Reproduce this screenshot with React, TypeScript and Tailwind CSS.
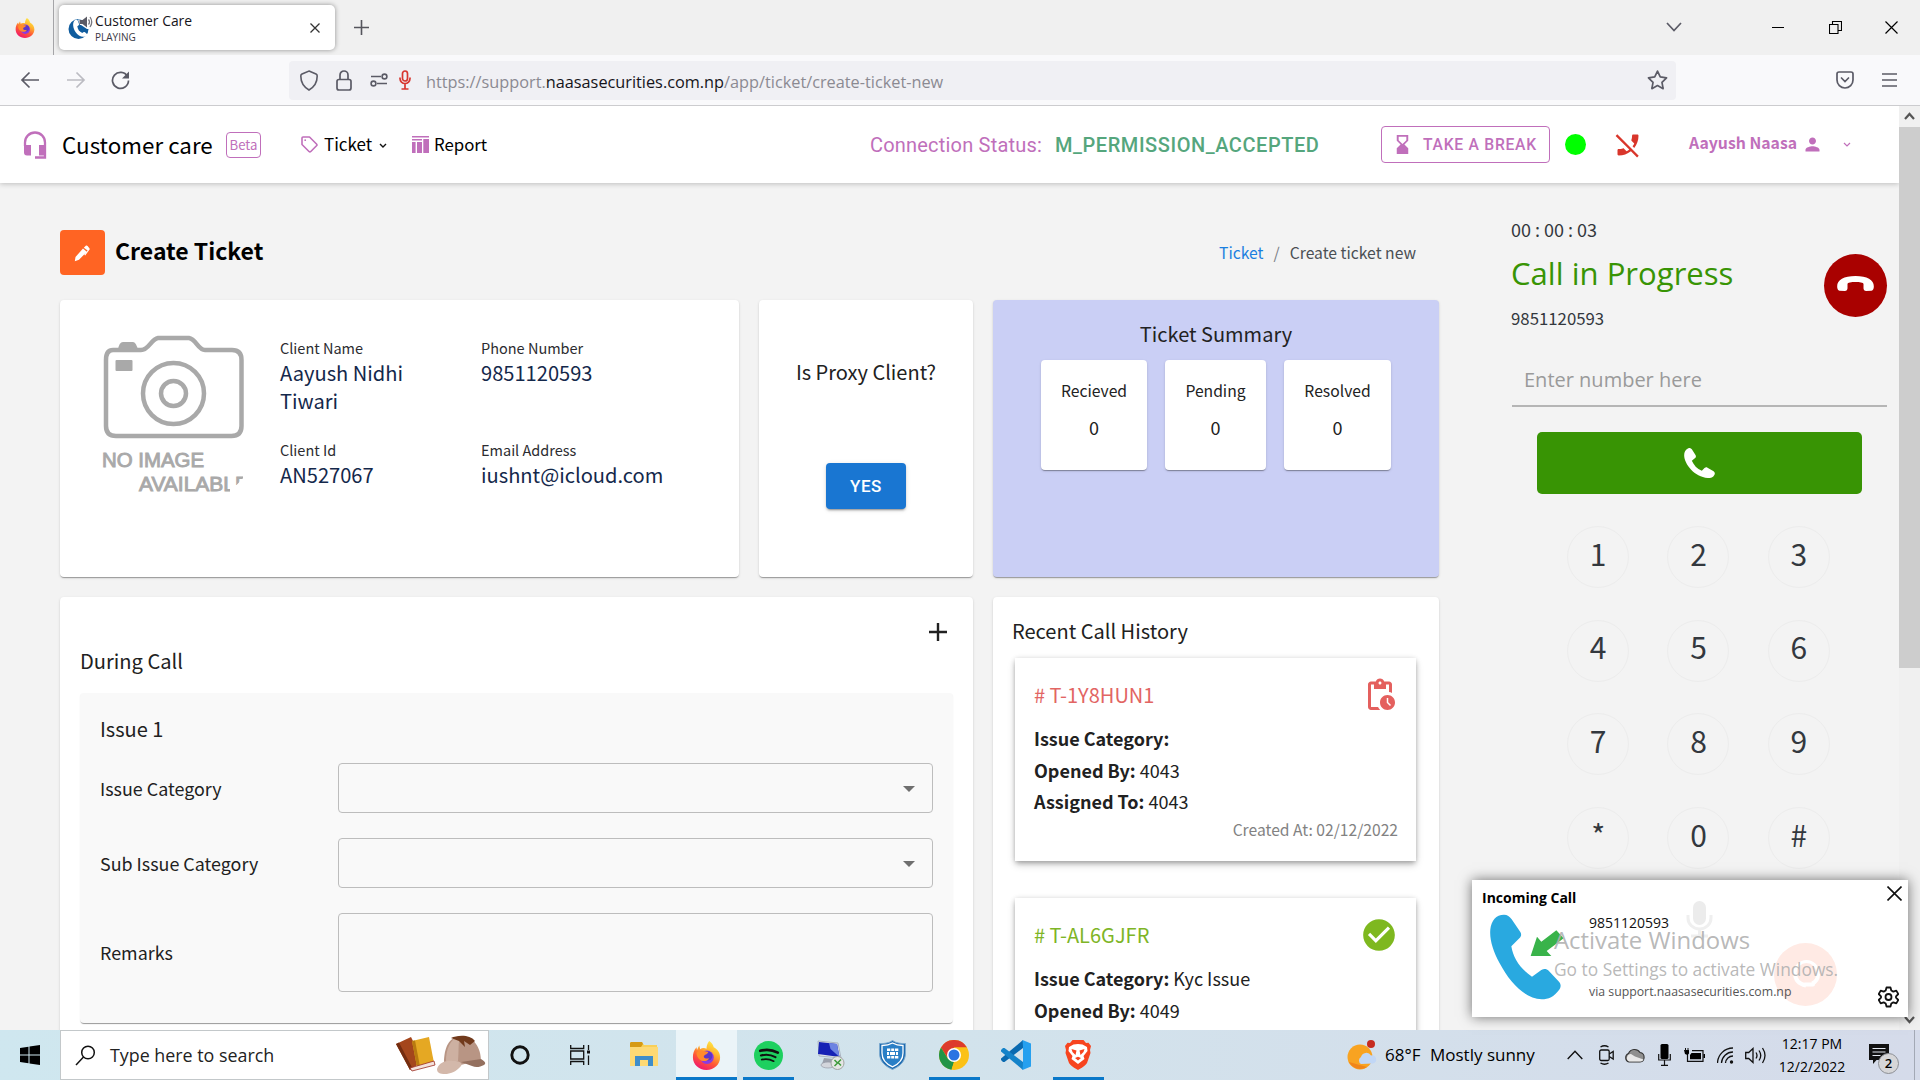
import React from 'react';
import type { ReactNode } from 'react';
import {
  MdCheckCircle,
  MdPerson,
  MdPhoneDisabled,
  MdHourglassBottom,
  MdOutlinePendingActions,
} from 'react-icons/md';

const JP = "font-['Noto_Sans_CJK_JP',sans-serif]";
const UI = "font-['Open_Sans',sans-serif]";
const RB = "font-['Roboto',sans-serif]";
const CARD = 'rounded-[4px] shadow-[0_2px_1px_-1px_rgba(0,0,0,0.2),0_1px_1px_0_rgba(0,0,0,0.14),0_1px_3px_0_rgba(0,0,0,0.12)]';

function Firefox({ size, id }: { size: number; id: string }) {
  return (
    <svg width={size} height={size} viewBox="0 0 32 32">
      <defs>
        <linearGradient id={id} x1="0.8" y1="0" x2="0.3" y2="1">
          <stop offset="0" stopColor="#fff04a" />
          <stop offset="0.35" stopColor="#ffb62e" />
          <stop offset="0.65" stopColor="#ff5a36" />
          <stop offset="1" stopColor="#f0146e" />
        </linearGradient>
      </defs>
      <path
        d="M19 0c3 2 4.500 4.500 5 7 4 2 7 6 7 11 0 8-6.500 14-15 14S1 26 1 18c0-4 1-8 4-11l.5 3L8 5l1 4c2-1.500 5-1.500 7-.5 0-3 1-6 3-8.500z"
        fill={`url(#${id})`}
      />
      <circle cx="16.500" cy="18" r="7.500" fill="#8a3be0" />
      <circle cx="17.500" cy="16.500" r="5" fill="#5b36c8" />
      <path d="M5 13c3-3 6-3 8-2l5 1c-1 3-5 3-5 5s3 3 6 2c-2 4-8 4-11 1-2-2-3-4-3-7z" fill="#ff8a2b" />
    </svg>
  );
}

function TabBar() {
  return (
    <div className="flex h-[55px] items-start bg-[#f0f0f0]">
      <div className="flex h-[55px] w-[54px] items-center justify-center border-r border-[#a5a5a8] pr-[3px]">
        <Firefox size={20} id="ffTab" />
      </div>
      <div className={`ml-[5px] mt-[5px] flex h-[45px] w-[276px] items-center rounded-[5px] bg-white shadow-[0_0_5px_rgba(0,0,0,0.4)] ${UI}`}>
        <svg className="ml-[9px] mt-[1px]" width="25" height="26" viewBox="0 0 25 26">
          <circle cx="10.500" cy="14" r="10" fill="#0f5c9e" />
          <path d="M7 5c1.500-.7 2.300-.3 3 1l1 3c.2 1-.5 1.700-1.700 2.300.5 3.300 2 5.500 5 6.700 1-1 1.700-1.300 2.700-.7l2 1.700c.5 1-.2 2-1.500 2.500-4 1-7.500-.7-10-4.500S4 7.500 7 5z" fill="#fff" />
          <path d="M10 4.500h3L19 0h6v14h-6l-6-4h-1z" fill="#fff" />
          <path d="M11.500 5h3L19 1.500v11L14.500 9h-3z" fill="#5b5b66" />
          <path d="M20.500 4.500q2 2.500 0 5M22 2q3.500 5 0 10" fill="none" stroke="#77777f" strokeWidth="1.300" />
        </svg>
        <div className="ml-[2px] flex w-[205px] flex-col">
          <span className="h-[18px] text-[13.900px] leading-[18px] text-[#15141a]">Customer Care</span>
          <span className="mt-[1px] h-[12px] text-[10px] leading-[12px] text-[#3a3944]">PLAYING</span>
        </div>
        <svg className="ml-[10px]" width="10" height="10" viewBox="0 0 10 10"><path d="M.5.5l9 9m0-9l-9 9" stroke="#333" strokeWidth="1.300" /></svg>
      </div>
      <svg className="ml-[19px] mt-[20px]" width="15" height="15" viewBox="0 0 15 15"><path d="M7.500 0v15M0 7.500h15" stroke="#55555c" strokeWidth="1.600" /></svg>
      <div className="ml-auto flex h-[54px] items-center">
        <svg width="16" height="10" viewBox="0 0 16 10" className="mr-[90px]"><path d="M1 1l7 7.500L15 1" fill="none" stroke="#5b5b66" strokeWidth="1.700" /></svg>
        <svg width="12" height="12" viewBox="0 0 12 12" className="mr-[45px] mt-[1px]"><path d="M0 5.500h12" stroke="#000" /></svg>
        <svg width="13" height="13" viewBox="0 0 13 13" className="mr-[43px]">
          <path d="M.5 3.500h8.500v9H.5zM3.500 3.500V.5h9v9H9" fill="none" stroke="#000" strokeWidth="1.100" />
        </svg>
        <svg width="13" height="13" viewBox="0 0 13 13" className="mr-[22px]"><path d="M.5.5l12 12m0-12l-12 12" stroke="#000" strokeWidth="1.200" /></svg>
      </div>
    </div>
  );
}

function NavBar() {
  return (
    <div className="flex h-[51px] items-center border-b border-[#cccccf] bg-[#f9f9fb]">
      <svg className="ml-[20px]" width="20" height="18" viewBox="0 0 20 18" fill="none" stroke="#5b5b66" strokeWidth="1.700"><path d="M19 9H2M9.500 1.500L2 9l7.500 7.500" /></svg>
      <svg className="ml-[26px]" width="20" height="18" viewBox="0 0 20 18" fill="none" stroke="#bcbcc2" strokeWidth="1.700"><path d="M1 9h17M10.500 1.500L18 9l-7.500 7.500" /></svg>
      <svg className="ml-[25px]" width="19" height="19" viewBox="0 0 19 19">
        <path d="M16.500 5.500A8 8 0 1 0 17.500 9.500" fill="none" stroke="#5b5b66" strokeWidth="1.700" />
        <path d="M18 .5v7h-7z" fill="#5b5b66" />
      </svg>
      <div className={`ml-[159px] flex h-[39px] w-[1387px] items-center rounded-[4px] bg-[#f0f0f4] ${UI}`}>
        <svg className="ml-[11px]" width="18" height="21" viewBox="0 0 18 21" fill="none" stroke="#5b5b66" strokeWidth="1.600"><path d="M9 1L16 4c1 .5 1.200 1 1.200 2 0 6-3 11-8.200 14C3.800 17 .8 12 .8 6c0-1 .2-1.500 1.200-2z" /></svg>
        <svg className="ml-[18px]" width="16" height="21" viewBox="0 0 16 21" fill="none" stroke="#5b5b66" strokeWidth="1.700"><rect x="1" y="9.500" width="14" height="10.500" rx="2" /><path d="M4 9V5a4 4 0 0 1 8 0v4" /></svg>
        <svg className="ml-[18px]" width="18" height="14" viewBox="0 0 18 14" fill="none" stroke="#5b5b66" strokeWidth="1.600"><path d="M1 3.500h10M7 10.500h10" /><circle cx="14.500" cy="3.500" r="2.400" /><circle cx="3.500" cy="10.500" r="2.400" /></svg>
        <svg className="ml-[11px]" width="12" height="20" viewBox="0 0 12 20" fill="none" stroke="#d7362f" strokeWidth="1.700"><rect x="3.500" y="1" width="5" height="10" rx="2.500" /><path d="M1 7.500v1a5 5 0 0 0 10 0v-1M6 13.500V19M2.500 19h7" /></svg>
        <span className="ml-[15px] mt-[3px] whitespace-nowrap text-[16.300px] leading-[20px] text-[#8b8a92]">
          https://support.<span className="text-[#15141a]">naasasecurities.com.np</span>/app/ticket/create-ticket-new
        </span>
        <svg className="ml-auto mr-[8px]" width="21" height="20" viewBox="0 0 22 21" fill="none" stroke="#5b5b66" strokeWidth="1.800" strokeLinejoin="round"><path d="M11 1.200l2.900 6.100 6.600.9-4.800 4.700 1.200 6.700L11 16.400l-5.900 3.200 1.200-6.700L1.500 8.200l6.600-.9z" /></svg>
      </div>
      <svg className="ml-[160px]" width="18" height="18" viewBox="0 0 18 18" fill="none" stroke="#5b5b66" strokeWidth="1.700" strokeLinecap="round"><path d="M3 1h12c1.300 0 2 .7 2 2v6a8 8 0 0 1-16 0V3c0-1.300.7-2 2-2z" /><path d="M5.500 7L9 10.500 12.500 7" /></svg>
      <svg className="ml-[28px]" width="15" height="14" viewBox="0 0 15 14" stroke="#5b5b66" strokeWidth="1.600"><path d="M0 1h15M0 7h15M0 13h15" /></svg>
    </div>
  );
}

function AppHeader() {
  return (
    <header className={`relative z-10 flex h-[77px] shrink-0 items-center whitespace-nowrap bg-white text-black shadow-[0_1px_5px_rgba(0,0,0,0.22)] ${JP}`}>
      <svg className="ml-[23px] shrink-0" width="24" height="28" viewBox="0 0 24 28">
        <path d="M2 15V11.500a10 10 0 0 1 20 0V26.500H12" fill="none" stroke="#c06fbb" strokeWidth="2.300" />
        <path d="M1 14h7v10.500H4a3 3 0 0 1-3-3zM16 14h7v10.500h-7z" fill="#c06fbb" />
      </svg>
      <span className="-mt-[2px] ml-[15px] w-[164px] text-[22.400px] leading-[30px]">Customer care</span>
      <span className="flex h-[26px] w-[35px] items-center justify-center rounded-[4px] border border-[#c06fbb] text-[13.200px] leading-[20px] text-[#c06fbb]">Beta</span>
      <svg className="ml-[40px]" width="17" height="17" viewBox="0 0 17 17" fill="none" stroke="#c06fbb" strokeWidth="1.600" strokeLinejoin="round"><path d="M1 2c0-.6.400-1 1-1h6.500l7 7c.6.600.6 1.200 0 1.800l-5.700 5.700c-.6.600-1.200.600-1.800 0L1 8.500z" /><circle cx="4.200" cy="4.200" r=".9" fill="#c06fbb" stroke="none" /></svg>
      <span className="-mt-[2px] ml-[6px] w-[55px] text-[17px] leading-[24px]">Ticket</span>
      <svg width="8" height="6" viewBox="0 0 8 6" className="mt-[2px]"><path d="M1 1l3 3 3-3" fill="none" stroke="#111" strokeWidth="1.400" /></svg>
      <svg className="ml-[25px]" width="17" height="17" viewBox="0 0 17 17" fill="#c06fbb"><path d="M0 0h17v1.600H0zM0 3h10v1.600H0zM11.300 3H17v14h-5.700zM0 6h3.600v11H0zM5 6h5v11H5z" /></svg>
      <span className="-mt-[2px] ml-[5px] w-[436px] text-[16.800px] leading-[24px]">Report</span>
      <span className={`w-[185px] text-[20px] leading-[26px] tracking-[0.2px] text-[#c06fbb] ${RB}`}>Connection Status:</span>
      <span className={`w-[326px] text-[20px] font-medium leading-[26px] tracking-[0.55px] text-[#55a67d] ${RB}`}>M_PERMISSION_ACCEPTED</span>
      <span className={`flex h-[37px] w-[169px] shrink-0 items-center rounded-[4px] border border-[#c06fbb] text-[#c06fbb] ${RB}`}>
        <MdHourglassBottom className="ml-[9px]" size={23} />
        <span className="ml-[9px] text-[15.700px] font-medium leading-[20px] tracking-[0.72px]">TAKE A BREAK</span>
      </span>
      <span className="ml-[15px] size-[21px] shrink-0 rounded-full bg-[#00ff00]" />
      <MdPhoneDisabled className="ml-[28px] shrink-0 text-[#d9362b]" size={28} />
      <span className="-mt-[4px] ml-[47px] w-[113px] text-[15.800px] font-bold leading-[22px] text-[#c06fbb]">Aayush Naasa</span>
      <MdPerson className="shrink-0 text-[#c06fbb]" size={21} />
      <svg width="8" height="6" viewBox="0 0 8 6" className="ml-[20px]"><path d="M1 1l3 3 3-3" fill="none" stroke="#c06fbb" strokeWidth="1.200" /></svg>
    </header>
  );
}

function NoImage() {
  return (
    <svg width="147" height="165" viewBox="100 335 147 165" fill="none" stroke="#a9a9a9" strokeWidth="4.500">
      <path d="M113 350h28c8 0 10-11 17-12h31c7 1 9 12 16 12h27q9.500 0 9.500 10v66q0 10-10 10H116q-10 0-10-10v-66q0-10 7-10z" />
      <circle cx="173.500" cy="393.500" r="30.500" />
      <circle cx="173.500" cy="393.500" r="12.500" />
      <rect x="115.500" y="360" width="17" height="11" rx="1" fill="#a9a9a9" stroke="none" />
      <path d="M118 350q1-8 5-8h10q3 0 5 8z" fill="#a9a9a9" stroke="none" />
      <defs>
        <clipPath id="watermarkEdge">
          <path d="M100 440H243V478L236.500 485H100zM100 485H230V492L226 500H100z" />
        </clipPath>
      </defs>
      <g className="font-['Liberation_Sans',sans-serif] text-[19.500px] font-normal" fill="#a9a9a9" stroke="#a9a9a9" strokeWidth=".9">
        <text x="102" y="467" textLength="102" lengthAdjust="spacingAndGlyphs">NO IMAGE</text>
        <text x="139" y="491" textLength="110" lengthAdjust="spacingAndGlyphs" clipPath="url(#watermarkEdge)">AVAILABLE</text>
      </g>
    </svg>
  );
}

function Field({ label, value }: { label: string; value: string }) {
  return (
    <div className="flex h-[102px] flex-col">
      <span className="h-[23px] text-[14.500px] leading-[24px] text-[#2c2c30]">{label}</span>
      <span className="w-[140px] text-[20.100px] leading-[28px] text-[#14284b]">{value}</span>
    </div>
  );
}

function SummaryBox({ label, width }: { label: string; width: string }) {
  return (
    <div className={`flex h-[110px] flex-col items-center bg-white pt-[19px] text-[#222] ${CARD} ${width}`}>
      <span className="text-[15.700px] leading-[24px]">{label}</span>
      <span className="mt-[11px] text-[18px] leading-[26px]">0</span>
    </div>
  );
}

function SelectRow({ label }: { label: string }) {
  return (
    <div className="mb-[25px] flex h-[50px] items-center">
      <span className="w-[238px] text-[17.900px] leading-[26px]">{label}</span>
      <div className="flex h-[50px] flex-1 items-center justify-end rounded-[4px] border border-[#bdbdbd] pr-[17px]">
        <svg className="mt-px" width="12" height="6" viewBox="0 0 12 6"><path d="M0 0h12L6 6z" fill="#6f6f6f" /></svg>
      </div>
    </div>
  );
}

function HistoryCard({ id, color, icon, rows, height }: { id: string; color: string; icon: ReactNode; rows: [string, string][]; height: string }) {
  return (
    <div className={`ml-[3px] mr-[4px] flex shrink-0 flex-col bg-white pl-[19px] pr-[18px] pt-[20px] shadow-[0_3px_5px_-1px_rgba(0,0,0,0.25),0_4px_8px_rgba(0,0,0,0.14),0_0_5px_rgba(0,0,0,0.1)] ${height}`}>
      <div className="flex h-[34px] items-center justify-between">
        <span className={`text-[20.050px] leading-[28px] ${color}`}>{id}</span>
        {icon}
      </div>
      <div className="mt-[11px] flex flex-col text-[18px] text-[#212121]">
        {rows.map(([k, v]) => (
          <span key={k} className="h-[31.500px] leading-[31px]"><b className="font-bold">{k}</b> {v}</span>
        ))}
      </div>
      <span className="mt-[0.600px] self-end text-[15.650px] leading-[24px] text-[#828282]">Created At: 02/12/2022</span>
    </div>
  );
}

function Workspace() {
  return (
    <main className={`flex w-[1439px] shrink-0 flex-col pl-[60px] pt-[47px] ${JP}`}>
      <div className="flex h-[45px] items-center">
        <span className="flex size-[45px] items-center justify-center rounded-[4px] bg-[#ff6423]">
          <svg className="mt-[1px]" width="17" height="17" viewBox="0 0 17 17" fill="#fff"><path d="M.8 16.200L1.500 12 9 3.500 12.800 6.800 5 14.800zM9.800 2.700L11.500.9c.7-.7 1.500-.6 2.100 0l1.800 2.300c.4.500.4 1 0 1.500l-4.200 5.800-.9-.8 3.300-4.300z" /></svg>
        </span>
        <span className="-mt-[5px] ml-[10px] text-[23px] font-bold leading-[30px] text-black">Create Ticket</span>
        <span className="ml-auto mr-[23px] flex text-[15.700px] leading-[24px] text-[#4a4f54]">
          <span className="text-[#1a7fe0]">Ticket</span><span className="mx-[10px] text-[#7b8085]">/</span>Create ticket new
        </span>
      </div>
      <div className="mt-[25px] flex h-[277px] shrink-0 gap-[20px]">
        <section className={`flex w-[679px] bg-white pl-[40px] pt-[35px] ${CARD}`}>
          <NoImage />
          <div className="ml-[33px] mt-px grid grid-cols-[201px_220px] content-start">
            <Field label="Client Name" value="Aayush Nidhi Tiwari" />
            <Field label="Phone Number" value="9851120593" />
            <Field label="Client Id" value="AN527067" />
            <Field label="Email Address" value="iushnt@icloud.com" />
          </div>
        </section>
        <section className={`flex w-[214px] flex-col items-center bg-white pt-[58px] ${CARD}`}>
          <span className="text-[20px] leading-[28px] text-[#212121]">Is Proxy Client?</span>
          <span className={`mt-[77px] flex h-[46px] w-[80px] items-center justify-center rounded-[4px] bg-[#1976d2] pt-px text-[17px] font-medium tracking-[0.5px] text-white shadow-[0_3px_1px_-2px_rgba(0,0,0,0.2),0_2px_2px_rgba(0,0,0,0.14),0_1px_5px_rgba(0,0,0,0.12)] ${RB}`}>YES</span>
        </section>
        <section className={`flex w-[446px] flex-col items-center bg-[#cacff5] pt-[20px] ${CARD}`}>
          <span className="text-[20px] leading-[28px] text-[#222]">Ticket Summary</span>
          <div className="mt-[12px] flex gap-[18px]">
            <SummaryBox label="Recieved" width="w-[106px]" />
            <SummaryBox label="Pending" width="w-[101px]" />
            <SummaryBox label="Resolved" width="w-[107px]" />
          </div>
        </section>
      </div>
      <div className="mt-[20px] flex h-[520px] shrink-0 gap-[20px]">
        <section className={`flex w-[913px] flex-col bg-white px-[20px] pt-[26px] text-[#212121] ${CARD}`}>
          <svg className="mr-[6px] self-end" width="18" height="18" viewBox="0 0 18 18"><path d="M9 0v18M0 9h18" stroke="#212121" strokeWidth="2.400" /></svg>
          <span className="mt-[6px] text-[20.100px] leading-[28px]">During Call</span>
          <div className="mt-[18px] flex h-[330px] flex-col rounded-[4px] bg-[#f9f9f9] px-[20px] pt-[22px] shadow-[0_2px_1px_-1px_rgba(0,0,0,0.3),0_1px_1px_rgba(0,0,0,0.14)]">
            <span className="mb-[20px] text-[20px] leading-[28px]">Issue 1</span>
            <SelectRow label="Issue Category" />
            <SelectRow label="Sub Issue Category" />
            <div className="flex h-[79px] items-center">
              <span className="-mt-[2px] w-[238px] text-[17.900px] leading-[26px]">Remarks</span>
              <div className="h-[79px] flex-1 rounded-[4px] border border-[#bdbdbd]" />
            </div>
          </div>
        </section>
        <section className={`flex w-[446px] flex-col bg-white px-[19px] pt-[20px] ${CARD}`}>
          <span className="mb-[13px] text-[20.050px] leading-[28px] text-[#212121]">Recent Call History</span>
          <HistoryCard
            id="# T-1Y8HUN1"
            color="text-[#e26563]"
            height="h-[203px]"
            icon={<MdOutlinePendingActions className="text-[#e4605e]" size={36} />}
            rows={[['Issue Category:', ''], ['Opened By:', '4043'], ['Assigned To:', '4043']]}
          />
          <div className="h-[37.400px] shrink-0" />
          <HistoryCard
            id="# T-AL6GJFR"
            color="text-[#7eb526]"
            height="h-[203px]"
            icon={<MdCheckCircle className="text-[#7eb81f]" size={38} />}
            rows={[['Issue Category:', 'Kyc Issue'], ['Opened By:', '4049'], ['Assigned To:', '4049']]}
          />
        </section>
      </div>
    </main>
  );
}

function Dialer() {
  return (
    <aside className={`ml-[73px] flex w-[375px] shrink-0 flex-col pt-[33px] text-[#33383e] ${JP}`}>
      <span className="-ml-px text-[18px] leading-[26px]">00 : 00 : 03</span>
      <div className="flex h-[82px] items-start justify-between">
        <div className="-ml-px flex flex-col">
          <span className={`mt-[10px] text-[31.100px] leading-[42px] text-[#389404] ${UI}`}>Call in Progress</span>
          <span className="mt-[11px] text-[16.800px] leading-[26px]">9851120593</span>
        </div>
        <span className="mt-[12px] flex size-[63px] items-center justify-center rounded-full bg-[#a90100]">
          <svg className="-mt-[5px]" width="37" height="15" viewBox="1190 258 110 45"><path d="M1190 289c0-19 20-31 55-31s55 12 55 31c0 8-2 12-7 13l-16 1c-5 0-8-3-8-8v-13c0-4-12-6-24-6s-24 2-24 6v13c0 5-3 8-8 8l-16-1c-5-1-7-5-7-13z" fill="#fff" /></svg>
        </span>
      </div>
      <div className={`mt-[31px] flex h-[52px] items-start border-b-2 border-[#b5b5b5] pl-[12px] text-[20px] leading-[28px] text-[#9a9a9a] ${UI}`}>
        <span className="mt-[11px]">Enter number here</span>
      </div>
      <div className="mx-[25px] mt-[25px] flex h-[62px] shrink-0 items-center justify-center rounded-[5px] bg-[#389404]">
        <svg width="31" height="30" viewBox="732 774 92 90"><path d="M742 776c4-3 10-3 13 2l11 17c2 4 2 7-2 10l-9 7c6 13 15 24 30 30l8-8c3-2 6-3 9-1l17 10c5 3 6 7 4 11-4 8-11 10-20 10-40-2-71-42-71-68 0-10 4-17 10-20z" fill="#fff" /></svg>
      </div>
      <div className="ml-[36px] mr-[38px] mt-[32px] grid grid-cols-3 gap-y-[31.700px]">
        {['1', '2', '3', '4', '5', '6', '7', '8', '9', '*', '0', '#'].map((k) => (
          <span key={k} className="mx-auto flex size-[62px] items-center justify-center rounded-full border border-[#ececec] pb-[9px] text-[30px] leading-[40px]">{k}</span>
        ))}
      </div>
    </aside>
  );
}

function Scrollbar() {
  return (
    <div className="ml-auto flex w-[21px] shrink-0 flex-col items-center bg-[#f0f0f0]">
      <svg className="mt-[6px]" width="11" height="8" viewBox="0 0 11 8"><path d="M1 7l4.500-5L10 7" fill="none" stroke="#555" strokeWidth="2.200" /></svg>
      <div className="mt-[7px] h-[541px] w-[21px] bg-[#cdcdcd]" />
      <svg className="mb-[6px] mt-auto" width="11" height="8" viewBox="0 0 11 8"><path d="M1 1l4.500 5L10 1" fill="none" stroke="#555" strokeWidth="2.200" /></svg>
    </div>
  );
}

function IncomingCall() {
  return (
    <div className={`absolute left-[1472px] top-[880px] z-20 h-[137px] w-[436px] overflow-hidden bg-white shadow-[0_0_12px_rgba(0,0,0,0.55)] ${UI}`}>
      <svg className="absolute left-[214px] top-[20px]" width="27" height="40" viewBox="0 0 27 40"><rect x="7" y="1" width="13" height="24" rx="6.500" fill="#ececec" /><path d="M2 15v3a11.500 11 0 0 0 23 0v-3M13.500 29v6M5 36h17" fill="none" stroke="#efefef" strokeWidth="3" /></svg>
      <div className="absolute left-[302px] top-[63px] flex size-[63px] items-center justify-center rounded-full bg-[#ffeae4]">
        <svg width="32" height="32" viewBox="0 0 32 32" fill="none" stroke="#fff"><path d="M5 14a11.500 11.500 0 0 1 23 0v3" strokeWidth="3" /><path d="M5 14c0 7 4 11 11 12.500M28 15c0 4-2 8-6 9.500" strokeWidth="4" /><path d="M15 25.500h8" strokeWidth="4" strokeLinecap="round" /></svg>
      </div>
      <div className="relative flex flex-col">
        <span className="ml-[10px] mt-[8px] text-[14px] font-bold leading-[20px] text-black">Incoming Call</span>
        <div className="flex">
          <svg className="ml-[18px] mt-[6px]" width="75" height="87" viewBox="150 402 225 261">
            <path d="M192 404c10 0 17 5 23 14l26 38c4 7 3 13-3 19l-24 24c6 38 28 68 62 91l28-20c8-5 16-4 22 2l31 33c7 8 6 17 0 25-15 20-31 28-52 28-52-3-95-50-126-108-20-38-31-72-28-102 3-26 17-44 41-44z" fill="#29a9e0" />
            <path d="M272 528l19-58 13 15 45-34 22 24-51 38 14 15z" fill="#39b34a" />
          </svg>
          <div className="ml-[24px] flex flex-col">
            <span className="mt-[5px] text-[14px] leading-[20px] text-[#111]">9851120593</span>
            <span className="mt-[49px] text-[12.300px] leading-[20px] text-[#555]">via support.naasasecurities.com.np</span>
          </div>
        </div>
      </div>
      <div className="absolute left-[82px] top-[43px] flex flex-col whitespace-nowrap text-[#b0b0b0]/90">
        <span className="text-[23.900px] leading-[33px]">Activate Windows</span>
        <span className="text-[17.350px] leading-[27px]">Go to Settings to activate Windows.</span>
      </div>
      <svg className="absolute right-[6px] top-[6px]" width="15" height="15" viewBox="0 0 15 15"><path d="M.5.5l14 14m0-14l-14 14" stroke="#111" strokeWidth="1.600" /></svg>
      <svg className="absolute right-[9px] top-[106px]" width="21" height="22" viewBox="0 0 21 22" fill="none" stroke="#111" strokeWidth="1.800" strokeLinejoin="round">
        <path d="M8.500 1.500h4l.8 3 2 1.100 3-1 2 3.400L18 10.300v1.400l2.300 2.300-2 3.400-3-1-2 1.100-.8 3h-4l-.8-3-2-1.100-3 1-2-3.400L3 11.700v-1.400L.7 8l2-3.400 3 1 2-1.100z" />
        <circle cx="10.500" cy="11" r="3" />
      </svg>
    </div>
  );
}

function Slot({ children, underline, active }: { children: ReactNode; underline?: boolean; active?: boolean }) {
  return (
    <div className="flex h-[50px] w-[62px] flex-col items-center">
      <div className={active ? 'flex h-[47px] w-[61px] items-center justify-center bg-[#ebf4f8] pt-[3px]' : 'flex h-[47px] w-[61px] items-center justify-center pt-[3px]'}>{children}</div>
      {underline && <div className={active ? 'h-[3px] w-[61px] bg-[#0a78c9]' : 'h-[3px] w-[51px] bg-[#0a78c9]'} />}
    </div>
  );
}

function Taskbar() {
  return (
    <footer className={`flex h-[50px] items-center whitespace-nowrap bg-linear-to-r from-[#cfe7ef] via-[#d2e3ec] to-[#d5dbea] text-black ${UI}`}>
      <svg className="ml-[20px]" width="20" height="20" viewBox="0 0 20 20"><path d="M0 3l8.500-1.200v7.700H0zM9.500 1.600L20 0v9.500H9.500zM0 10.500h8.500v7.700L0 17zM9.500 10.500H20V20L9.500 18.400z" /></svg>
      <div className="ml-[20px] flex h-[50px] w-[429px] shrink-0 items-center border border-[#c3c8ca] bg-white">
        <svg className="ml-[14px]" width="21" height="21" viewBox="0 0 21 21" fill="none" stroke="#111" strokeWidth="1.500"><circle cx="13" cy="7.500" r="6.300" /><path d="M8.500 12L1 20" /></svg>
        <span className="ml-[14px] w-[285px] text-[17.850px] leading-[24px] text-[#222]">Type here to search</span>
        <svg width="92" height="42" viewBox="395 1034 92 42">
          <path d="M396 1044l15-7 12 24-13 9z" fill="#a4461c" />
          <path d="M396 1044l3-1.500 13 25-2 2.500z" fill="#742d10" />
          <path d="M412 1041l17-4 5 26-17 4z" fill="#e5a823" />
          <path d="M412 1041l3-.6 5 26-3 .6z" fill="#b87a10" />
          <path d="M410 1068l24-7 1 4-23 6z" fill="#f4e2dc" stroke="#9a2c20" strokeWidth=".8" />
          <path d="M444 1064c0-17 5-27 17-28 13 0 20 12 20 25-12 0-24 8-37 3z" fill="#b89584" />
          <path d="M460 1036c-10 2-14 14-14 25l12 0c1-10 0-18 2-25z" fill="#cdb0a1" />
          <path d="M437 1069c2-7 10-9 16-8 7 0 10 2 8 5-5 6-11 8-16 8-5 0-8-1-8-5z" fill="#d3b8aa" />
          <path d="M461 1062l20-3c3 2 6 4 3 6-4 2-8 3-12 1z" fill="#94705f" />
          <path d="M451 1038c6-3 19-4 24 3l-5 4-6-4 1 6-6-6z" fill="#713a1c" />
        </svg>
      </div>
      <Slot><svg width="20" height="20" viewBox="0 0 20 20"><circle cx="10" cy="10" r="8.200" fill="none" stroke="#111" strokeWidth="2.900" /></svg></Slot>
      <Slot><svg className="mr-[4px]" width="21" height="20" viewBox="0 0 21 20" fill="none" stroke="#111" strokeWidth="1.300"><path d="M.7 0v3.500h13V0M.7 20v-3.500h13V20M.7 6h13v8H.7zM18.500 0v5M18.500 10.500V20" /><path d="M17 5.500h3v3h-3z" fill="#111" stroke="none" /></svg></Slot>
      <Slot>
        <svg width="28" height="26" viewBox="0 0 28 26"><path d="M0 3V1l1-1h11l2 3h13v21H0z" fill="#f8cf58" /><path d="M0 4V1l1-1h11l1 2-2 3H0z" fill="#d69a13" /><path d="M0 5h28v19H0z" fill="#fdd974" /><path d="M5 24V14h18v10h-5v-6h-8v6z" fill="#3f8dc9" /></svg>
      </Slot>
      <Slot underline active><Firefox size={29} id="ffTask" /></Slot>
      <Slot underline>
        <svg width="29" height="29" viewBox="0 0 28 28"><circle cx="14" cy="14" r="14" fill="#1ed05f" /><g fill="none" stroke="#111" strokeLinecap="round"><path d="M6 9.500q9-2.500 17 1.800" strokeWidth="2.500" /><path d="M6.700 14q7.500-2 14 1.600" strokeWidth="2" /><path d="M7.500 18q6-1.500 11.500 1.500" strokeWidth="1.700" /></g></svg>
      </Slot>
      <Slot>
        <svg width="29" height="30" viewBox="0 0 29 30"><path d="M2 1l20 2 3 15-22-2z" fill="#dfe3ea" stroke="#98a0b0" strokeWidth=".7" /><path d="M3 2l18 2 2.500 13L2 14z" fill="#1621b5" /><path d="M13 3l8 1 2.500 13-9-8z" fill="#6d83e2" /><path d="M8 18l9 1v5H6z" fill="#9ba1ac" /><ellipse cx="12" cy="25" rx="7" ry="3" fill="#d3d6dc" stroke="#969ba6" strokeWidth=".7" /><circle cx="21.500" cy="23" r="6.500" fill="#e4e6e4" stroke="#a2a4a2" /><path d="M18.500 20l3 3-3 3M25 19.500l-3 3 3 3" fill="none" stroke="#3f9b3b" strokeWidth="1.500" /></svg>
      </Slot>
      <Slot>
        <svg width="27" height="30" viewBox="0 0 27 30"><path d="M13.500.5C17 3 21 3.700 26.500 3.500V13c0 8-5 13-13 16.500C5.500 26 .5 21 .5 13V3.500C6 3.700 10 3 13.500.5z" fill="#1e6bb0" stroke="#7aa9cf" /><path d="M13.500 3C17 5 20 5.500 24 5.500V13c0 6.500-4 11-10.500 13.800C7 24 3 19.500 3 13V5.500C7 5.500 10 5 13.500 3z" fill="#2a7fc6" stroke="#fff" strokeWidth="1.300" /><path d="M8 8.500h3.300v2.500H8zM12.200 8.500h3v2.500h-3zM16 8.500h3.300v2.500H16zM8 12h2v3H8zM17 12h2v3h-2zM11 12h5v3h-5zM8 16h3.300v2.500H8zM12.200 16h3v2.500h-3zM16 16h3.300v2.500H16z" fill="#fff" /></svg>
      </Slot>
      <Slot underline>
        <svg width="30" height="30" viewBox="0 0 30 30"><circle cx="15" cy="15" r="15" fill="#fbc116" /><path d="M2 7.500A15 15 0 0 1 28 7.500H15L9 18.500z" fill="#dd3b2c" /><path d="M2 7.500L8.800 18.500 15 22l-2.500 7.800A15 15 0 0 1 2 7.500z" fill="#229447" /><path d="M28 7.500H15l6.500 11L15 22l-2.500 7.800L21.500 18.500z" fill="#fbc116" /><circle cx="15" cy="15" r="7" fill="#fff" /><circle cx="15" cy="15" r="5.500" fill="#2b74e2" /></svg>
      </Slot>
      <Slot>
        <svg width="30" height="30" viewBox="0 0 30 30"><path d="M22 0v8L3.500 22 2 22 0 20v-1.500z" fill="#0a6ab0" /><path d="M0 11.500v-1.500L2 8h1.500L22 22v8z" fill="#1583c9" /><path d="M21.500 0L30 3.500v23L21.500 30l.5-7V7z" fill="#26a0ef" /></svg>
      </Slot>
      <Slot underline>
        <svg width="26" height="30" viewBox="0 0 26 30"><path d="M7.500 0h11l2.500 3 2.500-.3L26 6l-1 4 .5 3L22 23c-1 2-6 5.500-9 7-3-1.500-8-5-9-7L.5 13 1 10 0 6l2.500-3.300L5 3z" fill="#f7441f" /><path d="M13 4l4.500.5L22 7l.5 4-4 5 1 3-6.500 5-6.500-5 1-3-4-5L4 7l4.500-2.500z" fill="#fff" /><path d="M6.500 9l5 1.500-1 4.500-3-3zM19.500 9l-5 1.500 1 4.500 3-3zM10 18l3-1.200 3 1.200-3 2.500z" fill="#f7441f" /></svg>
      </Slot>
      <svg className="ml-[238px]" width="30" height="30" viewBox="0 0 30 30"><circle cx="13" cy="17" r="12.500" fill="#f8a321" /><path d="M2 22a12.500 12.500 0 0 0 18 5z" fill="#f0851b" /><circle cx="24" cy="4" r="4" fill="#c62b1f" /><path d="M14 24a4 4 0 0 1 0-7 5.500 5.500 0 0 1 10-1.500 4 4 0 0 1 2 8z" fill="#c1d7f6" /></svg>
      <span className="ml-[8px] w-[45px] text-[17px] leading-[24px]">68°F</span>
      <span className="w-[137px] text-[17px] leading-[24px]">Mostly sunny</span>
      <svg width="16" height="10" viewBox="0 0 16 10"><path d="M.7 9L8 1.300 15.300 9" fill="none" stroke="#111" strokeWidth="1.400" /></svg>
      <svg className="ml-[16px]" width="15" height="20" viewBox="0 0 15 20" fill="none" stroke="#111" strokeWidth="1.300"><rect x=".7" y="5" width="9.500" height="10.500" rx="1.500" /><path d="M10.200 9l4-2.500v7.500l-4-2.500M1.500 2q4-2.500 8 0M1.500 18q4 2.500 8 0" /></svg>
      <svg className="ml-[10px]" width="21" height="15" viewBox="0 0 21 15"><path d="M5 14a4.500 4.500 0 0 1-.5-8.500A6.500 6.500 0 0 1 16 4.500 4.800 4.800 0 0 1 16 14z" fill="#8f8f8f" stroke="#333" strokeWidth="1.100" /><path d="M5 13.500a4 4 0 0 1 2-7.500l4 2.500 8.500 3c-.5 1.500-2 2-3.500 2z" fill="#e8e8e8" /></svg>
      <svg className="ml-[13px]" width="13" height="22" viewBox="0 0 13 22"><rect x="2.500" y="0" width="8" height="15" rx="1.500" /><path d="M.7 10v6h11.600v-6M6.500 16v5M3 21.300h7" fill="none" stroke="#111" strokeWidth="1.200" /></svg>
      <svg className="ml-[13px]" width="21" height="15" viewBox="0 0 21 15"><path d="M3.500 6V13.300H19V2.700H8" fill="none" stroke="#111" strokeWidth="1.200" /><path d="M7.500 5H17v6.300H6V7zM19.500 6H21v4h-1.500zM0 2h5v3.500L3.500 7 1 6z" /><path d="M1.500 0v3M4 0v3" stroke="#111" /></svg>
      <svg className="ml-[12px]" width="17" height="17" viewBox="0 0 17 17" fill="none" stroke="#111" strokeWidth="1.300"><path d="M.5 16A15.500 15.500 0 0 1 16 1M4.500 16A11.500 11.500 0 0 1 16 5M8.500 16A7.500 7.500 0 0 1 16 9" /><circle cx="14.500" cy="15" r="1.700" fill="#111" stroke="none" /></svg>
      <svg className="ml-[11px]" width="22" height="19" viewBox="0 0 22 19" fill="none" stroke="#111" strokeWidth="1.300"><path d="M.7 6.500h3L8 2.500v14l-4.300-4h-3zM11 6.500q2 3 0 6M14 4.500q3.500 5 0 10M17.500 2q5 7.500 0 15" /></svg>
      <div className="ml-[11px] flex w-[68px] flex-col items-center text-[14px] leading-[23px]">
        <span>12:17 PM</span>
        <span>12/2/2022</span>
      </div>
      <div className="relative ml-[23px] size-[22px]">
        <svg width="21" height="21" viewBox="0 0 21 21"><path d="M0 0h20v16H7.500L4 20v-4H0z" fill="#111" /><path d="M3.500 4.500h13M3.500 8h13M3.500 11.500h8" stroke="#e3e8f0" strokeWidth="1.200" /></svg>
        <span className="absolute left-[9px] top-[9px] flex size-[21px] items-center justify-center rounded-full border border-[#8c8f94] bg-[#d6d6d8] text-[13px] font-semibold leading-[13px]">2</span>
      </div>
      <div className="ml-auto mr-[5px] h-[50px] w-px bg-[#a3a9b5]" />
    </footer>
  );
}

export default function App() {
  return (
    <div className="relative flex h-[1080px] w-[1920px] flex-col overflow-hidden bg-[#f3f3f3]">
      <TabBar />
      <NavBar />
      <div className="flex h-[924px] overflow-hidden">
        <div className="flex w-[1899px] flex-col overflow-hidden">
          <AppHeader />
          <div className="flex">
            <Workspace />
            <Dialer />
          </div>
        </div>
        <Scrollbar />
      </div>
      <Taskbar />
      <IncomingCall />
    </div>
  );
}
